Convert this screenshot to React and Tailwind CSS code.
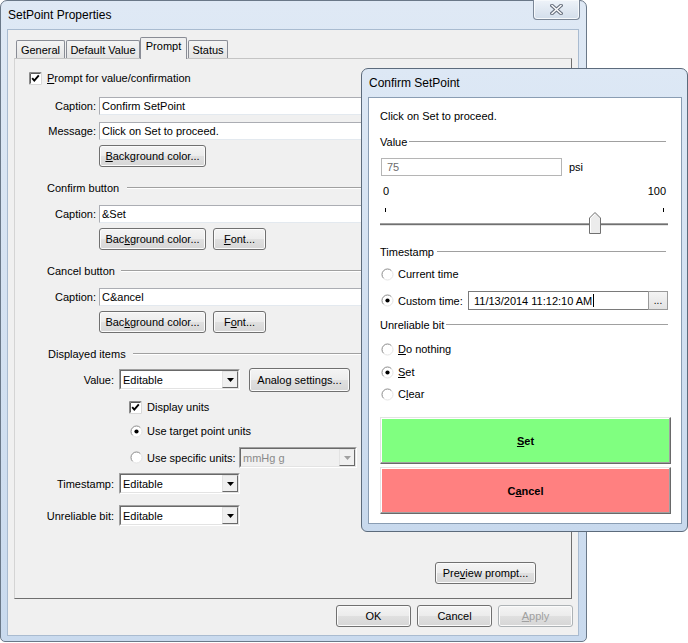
import React from 'react';

const Check = () => (
  <svg width="13" height="13" viewBox="0 0 13 13" className="shrink-0">
    <rect x="0" y="0" width="13" height="13" fill="#fff" />
    <path d="M0.5 12.5V0.5H12.5" fill="none" stroke="#8a8a8a" />
    <path d="M12.5 0.5V12.5H0.5" fill="none" stroke="#d8d8d8" />
    <path d="M1.5 11.5V1.5H11.5" fill="none" stroke="#5a5a5a" />
    <path d="M3.2 6.2L5.3 8.6L9.8 3.4" fill="none" stroke="#000" strokeWidth="1.9" />
  </svg>
);

const Radio = ({ on }) => (
  <svg width="13" height="13" viewBox="0 0 13 13" className="shrink-0">
    <circle cx="6.5" cy="6.5" r="5.5" fill="#fff" />
    <path d="M2.61 10.39A5.5 5.5 0 0 1 10.39 2.61" fill="none" stroke="#8a8a8a" />
    <path d="M10.39 2.61A5.5 5.5 0 0 1 2.61 10.39" fill="none" stroke="#e4e4e4" />
    {on && <circle cx="6.5" cy="6.5" r="2.1" fill="#000" />}
  </svg>
);

const Arrow = ({ color = '#000' }) => (
  <svg width="7" height="4" viewBox="0 0 7 4">
    <path d="M0 0H7L3.5 4Z" fill={color} />
  </svg>
);

// Win7 push button
const Btn = ({ className = '', children, disabled }) => (
  <div
    className={`flex items-center justify-center rounded-[3px] border border-[#707070] bg-[linear-gradient(#f4f4f4_0%,#ececec_49%,#e0e0e0_50%,#d6d6d6_100%)] shadow-[inset_0_0_0_1px_#fbfbfb] ${disabled ? 'text-[#a0a0a0] border-[#adb2b5]' : ''} ${className}`}
  >
    {children}
  </div>
);

const TextBox = ({ className = '', children }) => (
  <div className={`flex items-center bg-white border border-[#abadb3] border-r-[#dbdfe6] border-b-[#e3e9ef] pl-[2px] whitespace-nowrap overflow-hidden ${className}`}>
    {children}
  </div>
);

const Select = ({ className = '', value, disabled }) => (
  <div className={`flex h-[21px] border border-t-[#a0a0a0] border-l-[#a0a0a0] border-r-white border-b-white ${disabled ? 'bg-[#f0f0f0] text-[#8a8a8a]' : 'bg-white'} ${className}`}>
    <div className="flex flex-1 border border-t-[#696969] border-l-[#696969] border-r-[#e3e3e3] border-b-[#e3e3e3]">
      <div className="flex-1 flex items-center pl-[2px]">{value}</div>
      <div className="w-[16px] flex items-center justify-center bg-[#f0f0f0] border border-t-[#e3e3e3] border-l-[#e3e3e3] border-r-[#696969] border-b-[#696969]">
        <Arrow color={disabled ? '#a0a0a0' : '#000'} />
      </div>
    </div>
  </div>
);

const Group = ({ label, className = '', lineClass = '' }) => (
  <div className={`flex items-center h-[14px] ${className}`}>
    <span className="whitespace-nowrap">{label}</span>
    <div className={`flex-1 h-[2px] border-t border-t-[#a0a0a0] border-b border-b-white ${lineClass}`} />
  </div>
);

const Tab = ({ className = '', children }) => (
  <div className={`h-[18px] flex items-center justify-center rounded-t-[2px] border border-b-0 border-[#898c95] bg-[linear-gradient(#f4f4f4,#e4e4e4)] ${className}`}>
    {children}
  </div>
);

const FieldRow = ({ label, value, className = '' }) => (
  <div className={`flex items-center h-[18px] ${className}`}>
    <span className="w-[81px] text-right">{label}</span>
    <TextBox className="ml-[3px] w-[460px] h-[18px]">{value}</TextBox>
  </div>
);

const ComboRow = ({ label, className = '', children }) => (
  <div className={`flex items-center h-[21px] ${className}`}>
    <span className="w-[99px] text-right">{label}</span>
    <Select className="ml-[5px] w-[121px]" value="Editable" />
    {children}
  </div>
);

const MainDialog = () => (
  <div className="absolute left-0 top-0 w-[587px] h-[642px] rounded-t-[7px] rounded-b-[5px] border border-[#6a7888] bg-[linear-gradient(#dfe9f5,#c9daee)] flex flex-col">
    {/* Title bar */}
    <div className="h-[28px] flex items-start shrink-0">
      <span className="ml-[7px] mt-[7px] text-[12px] leading-[14px]">SetPoint Properties</span>
      <div className="ml-auto -mt-px mr-[6px] w-[47px] h-[20px] flex items-center justify-center rounded-b-[4px] border border-[#7b8797] border-t-0 bg-[linear-gradient(#eef3f9,#d3deeb)] shadow-[inset_0_0_0_1px_#f6f9fc]">
        <svg width="13" height="11" viewBox="0 0 13 11">
          <path d="M2 1.5L11 9.5M11 1.5L2 9.5" stroke="#6a7280" strokeWidth="3.6" strokeLinecap="square" />
          <path d="M2 1.5L11 9.5M11 1.5L2 9.5" stroke="#fff" strokeWidth="1.4" strokeLinecap="square" />
        </svg>
      </div>
    </div>

    {/* Client area */}
    <div className="ml-[6px] w-[572px] h-[607px] border border-[#a9bbd0] bg-[#f0f0f0] flex flex-col">
      <div className="ml-[6px] mt-[6px] w-[558px]">
        <div className="flex items-end h-[22px]">
          <Tab className="ml-[2px] w-[49px]">General</Tab>
          <Tab className="ml-[1px] w-[74px]">Default Value</Tab>
          <div className="relative z-10 -mb-px h-[22px] w-[47px] rounded-t-[2px] border border-b-0 border-[#898c95] bg-[#f0f0f0] flex justify-center pt-[1px]">
            Prompt
          </div>
          <Tab className="ml-[1px] w-[40px]">Status</Tab>
        </div>

        {/* Prompt page */}
        <div className="h-[541px] border border-t-[#c4c4c4] border-l-[#d4d4d4] border-r-[#6f6f6f] border-b-[#6f6f6f] flex flex-col">
          <div className="mt-[12px] h-[14px] flex items-center pl-[14px]">
            <Check />
            <span className="ml-[5px]"><u>P</u>rompt for value/confirmation</span>
          </div>
          <FieldRow className="mt-[12px]" label="Caption:" value="Confirm SetPoint" />
          <FieldRow className="mt-[7px]" label="Message:" value="Click on Set to proceed." />
          <div className="mt-[5px] h-[22px] flex pl-[84px]">
            <Btn className="w-[107px]"><span><u>B</u>ackground color...</span></Btn>
          </div>

          <Group className="mt-[14px] pl-[32px]" lineClass="ml-[8px] mr-[8px]" label="Confirm button" />
          <FieldRow className="mt-[10px]" label="Caption:" value="&Set" />
          <div className="mt-[5px] h-[22px] flex pl-[84px] gap-[7px]">
            <Btn className="w-[107px]"><span>Bac<u>k</u>ground color...</span></Btn>
            <Btn className="w-[53px]"><span><u>F</u>ont...</span></Btn>
          </div>

          <Group className="mt-[14px] pl-[32px]" lineClass="ml-[6px] mr-[8px]" label="Cancel button" />
          <FieldRow className="mt-[10px]" label="Caption:" value="C&ancel" />
          <div className="mt-[5px] h-[22px] flex pl-[84px] gap-[7px]">
            <Btn className="w-[107px]"><span>Bac<u>k</u>ground color...</span></Btn>
            <Btn className="w-[53px]"><span>F<u>o</u>nt...</span></Btn>
          </div>

          <Group className="mt-[14px] pl-[33px]" lineClass="ml-[7px] mr-[8px]" label="Displayed items" />
          <ComboRow className="mt-[8px]" label="Value:">
            <Btn className="ml-[9px] w-[101px] h-[24px]">Analog settings...</Btn>
          </ComboRow>
          <div className="mt-[10px] h-[14px] flex items-center pl-[114px]">
            <Check />
            <span className="ml-[5px]">Display units</span>
          </div>
          <div className="mt-[10px] h-[14px] flex items-center pl-[115px]">
            <Radio on />
            <span className="ml-[4px]">Use target point units</span>
          </div>
          <div className="mt-[9px] h-[21px] flex items-center pl-[115px]">
            <Radio />
            <span className="ml-[4px] w-[92px]">Use specific units:</span>
            <Select className="w-[118px]" value="mmHg g" disabled />
          </div>
          <ComboRow className="mt-[5px]" label="Timestamp:" />
          <ComboRow className="mt-[11px]" label="Unreliable bit:" />

          <div className="flex-1" />
          <div className="flex justify-end pr-[35px] mb-[14px]">
            <Btn className="w-[101px] h-[22px]"><span>Pre<u>v</u>iew prompt...</span></Btn>
          </div>
        </div>
      </div>

      <div className="mt-[6px] flex justify-end gap-[6px] pr-[5px]">
        <Btn className="w-[75px] h-[22px]">OK</Btn>
        <Btn className="w-[75px] h-[22px]">Cancel</Btn>
        <Btn className="w-[75px] h-[22px]" disabled><span><u>A</u>pply</span></Btn>
      </div>
    </div>
  </div>
);

const Slider = () => (
  <svg width="291" height="30" viewBox="0 0 291 30" className="block">
    <rect x="5" y="2" width="1" height="4" fill="#000" />
    <rect x="283" y="2" width="1" height="4" fill="#000" />
    <rect x="0" y="17" width="288" height="1" fill="#a0a0a0" />
    <rect x="0" y="18" width="288" height="1" fill="#707070" />
    <rect x="0" y="19" width="288" height="1" fill="#e3e3e3" />
    <path d="M209.5 27.5V12L215 6.5L220.5 12V27.5Z" fill="#ececec" stroke="#707070" />
    <path d="M210.5 26.5V12.4L215 8" fill="none" stroke="#fff" />
  </svg>
);

const RadioRow = ({ on, className = '', children }) => (
  <div className={`h-[14px] flex items-center pl-[1px] ${className}`}>
    <Radio on={on} />
    <span className="ml-[4px]">{children}</span>
  </div>
);

const ConfirmDialog = () => (
  <div className="absolute left-[361px] top-[68px] w-[327px] h-[464px] rounded-t-[7px] rounded-b-[6px] border border-[#5c6b7c] bg-[linear-gradient(#dde8f5,#c8d9ed)] flex flex-col">
    <div className="h-[28px] flex items-center pl-[7px] text-[12px] shrink-0">Confirm SetPoint</div>
    <div className="ml-[6px] w-[314px] h-[427px] border border-[#8a9db3] bg-white flex flex-col pl-[11px] pr-[10px]">
      <div className="mt-[11px] h-[14px]">Click on Set to proceed.</div>

      <Group className="mt-[12px]" lineClass="ml-[2px] mr-[5px]" label="Value" />
      <div className="mt-[9px] h-[18px] flex items-center">
        <div className="ml-[1px] w-[181px] h-[18px] flex items-center pl-[5px] border border-[#b5b5b5] text-[#6d6d6d]">75</div>
        <span className="ml-[7px]">psi</span>
      </div>
      <div className="mt-[8px] h-[14px] flex justify-between pl-[3px] pr-[5px]">
        <span>0</span>
        <span>100</span>
      </div>
      <div className="mt-[8px] h-[30px]">
        <Slider />
      </div>

      <Group className="mt-[9px]" lineClass="ml-[3px] mr-[5px]" label="Timestamp" />
      <RadioRow className="mt-[8px]">Current time</RadioRow>
      <div className="mt-[10px] h-[19px] flex items-center pl-[1px]">
        <Radio on />
        <span className="ml-[4px] w-[70px]">Custom time:</span>
        <div className="w-[180px] h-[19px] flex items-center pl-[5px] border border-[#7a7a7a] border-r-0">
          11/13/2014 11:12:10 AM<span className="ml-px w-px h-[13px] bg-black" />
        </div>
        <div className="w-[20px] h-[19px] flex items-end justify-center pb-[3px] border border-[#9a9a9a] bg-[linear-gradient(#f4f4f4,#e2e2e2)] text-[10px] leading-[10px]">...</div>
      </div>

      <Group className="mt-[8px]" lineClass="ml-[2px] mr-[3px]" label="Unreliable bit" />
      <RadioRow className="mt-[10px]"><u>D</u>o nothing</RadioRow>
      <RadioRow className="mt-[9px]" on><u>S</u>et</RadioRow>
      <RadioRow className="mt-[8px]">C<u>l</u>ear</RadioRow>

      <div className="mt-[16px] h-[47px] flex items-center justify-center font-bold bg-[#80ff80] border border-t-[#e3e3e3] border-l-[#e3e3e3] border-r-[#696969] border-b-[#696969] shadow-[inset_-1px_-1px_0_#a0a0a0,inset_1px_1px_0_#fff]">
        <span><u>S</u>et</span>
      </div>
      <div className="mt-[3px] h-[47px] flex items-center justify-center font-bold bg-[#ff8080] border border-t-[#e3e3e3] border-l-[#e3e3e3] border-r-[#696969] border-b-[#696969] shadow-[inset_-1px_-1px_0_#a0a0a0,inset_1px_1px_0_#fff]">
        <span>C<u>a</u>ncel</span>
      </div>
    </div>
  </div>
);

export default function App() {
  return (
    <div className="relative w-[688px] h-[643px] overflow-hidden bg-white font-['Liberation_Sans',Arial,sans-serif] text-[11px] leading-[14px] text-black">
      <MainDialog />
      <ConfirmDialog />
    </div>
  );
}
